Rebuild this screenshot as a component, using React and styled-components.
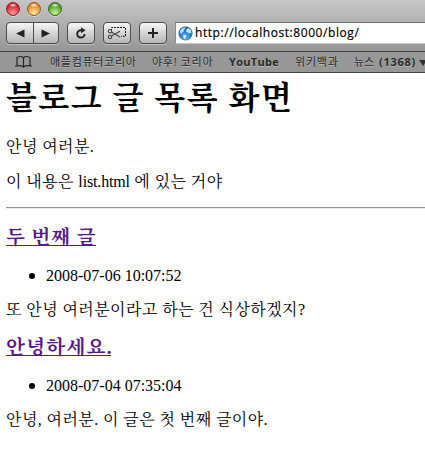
import React from "react";
import styled, { createGlobalStyle } from "styled-components";

const GlobalStyle = createGlobalStyle`
  * { box-sizing: border-box; }
  html, body { margin: 0; background: #fff; overflow: hidden; }
`;

const Browser = styled.div`
  width: 425px;
  height: 454px;
  overflow: hidden;
  background: #fff;
  color: #000;
`;

const Chrome = styled.header`
  height: 52px;
  background: linear-gradient(#c6c6c6, #969696);
  border-bottom: 1px solid #404040;
`;

const TrafficLights = styled.div`
  display: flex;
  gap: 7px;
  height: 22px;
  padding: 2px 0 0 6px;
`;

const Light = styled.i`
  width: 14px;
  height: 14px;
  border-radius: 50%;
  border: 1px solid ${(p) => p.$edge};
  background:
    radial-gradient(ellipse 4px 2px at 50% 18%, #fffffff0, #ffffff00),
    radial-gradient(circle at 50% 85%, ${(p) => p.$glow}, ${(p) => p.$tone} 75%);
  box-shadow: 0 1px 0 #ffffff70;
`;

const Toolbar = styled.div`
  display: flex;
  gap: 8px;
  padding-left: 6px;
  height: 22px;
`;

const ButtonGroup = styled.div`
  display: flex;
  height: 22px;
  border: 1px solid #4d4d4d;
  border-radius: 4px;
  overflow: hidden;
  background: linear-gradient(#f6f6f6, #b5b5b5);
  box-shadow: 0 1px 0 #bdbdbd;
`;

const ToolButton = styled.button`
  display: flex;
  align-items: center;
  justify-content: center;
  width: ${(p) => p.$width || 26}px;
  padding: 0;
  border: 0;
  background: none;
  & + & { border-left: 1px solid #4d4d4d; }
  svg { display: block; }
`;

const AddressField = styled.div`
  display: flex;
  align-items: center;
  flex: 1;
  height: 22px;
  padding-left: 2px;
  background: #fff;
  border: 1px solid #8b8b8b;
  border-top-color: #707070;
  border-right: 0;
  border-bottom-color: #c4c4c4;
  white-space: nowrap;
`;

const Address = styled.span`
  margin-left: 2px;
  font: 12px/20px "Open Sans", "Noto Sans", sans-serif;
  letter-spacing: 0.57px;
  -webkit-text-stroke: 0.2px #000;
`;

const BookmarksBar = styled.nav`
  display: flex;
  height: 21px;
  padding-left: 14px;
  background: #979797;
  border-bottom: 1px solid #464646;
  color: #292929;
  white-space: nowrap;
`;

const BookIcon = styled.svg`
  flex: none;
  width: 19px;
  height: 14px;
  margin-top: 3px;
`;

const Bookmark = styled.span`
  flex: none;
  width: ${(p) => p.$width}px;
  margin-left: ${(p) => p.$gap}px;
  font: ${(p) => (p.$bold ? 700 : 400)} 11px/19px "Open Sans", "Noto Sans CJK KR", sans-serif;
  letter-spacing: ${(p) => p.$track || 0}px;
  text-shadow: 0 1px 0 #b6b6b6;
  b { margin-left: 2px; font-weight: 700; letter-spacing: 0.7px; }
`;

const MenuArrow = styled.svg`
  flex: none;
  width: 7px;
  height: 6px;
  margin-top: 8px;
`;

const Page = styled.main`
  padding: 2px 0 0 6px;
  font-family: "Liberation Serif", "Noto Serif CJK KR", "Noto Sans CJK KR", serif;
  font-size: 16px;
  white-space: nowrap;
`;

const Title = styled.h1`
  margin: 0;
  height: 54px;
  font-size: 32px;
  font-weight: 700;
  line-height: 46px;
  letter-spacing: 1.45px;
`;

const Paragraph = styled.p`
  margin: 0;
  height: ${(p) => p.$height || 35}px;
  line-height: 36px;
  letter-spacing: 0.42px;
`;

const Latin = styled.span`
  letter-spacing: -0.15px;
`;

const Rule = styled.hr`
  margin: 0;
  height: 2px;
  border: 0;
  border-top: 1px solid #959595;
  border-bottom: 1px solid #ececec;
`;

const Entry = styled.article`
  height: 110px;
  padding-top: 10px;
`;

const EntryTitle = styled.h2`
  display: flex;
  margin: 0;
  height: 40px;
  font-size: 19.5px;
  line-height: 38px;
`;

const EntryLink = styled.a`
  height: 27px;
  width: ${(p) => p.$width}px;
  border-bottom: 1px solid #551a8b;
  color: #551a8b;
  letter-spacing: ${(p) => p.$track}px;
`;

const Meta = styled.ul`
  display: flex;
  align-items: center;
  list-style: none;
  margin: 0;
  padding: 0 0 0 23px;
  height: 33px;
  line-height: 18px;
`;

const Stamp = styled.li`
  display: flex;
  align-items: center;
  gap: 11px;
  &::before {
    content: "";
    width: 6px;
    height: 6px;
    border-radius: 50%;
    background: #000;
  }
`;

const BackIcon = () => (
  <svg width="10" height="9"><path d="M9.5.5v8L1 4.5z" fill="#222" /></svg>
);

const ForwardIcon = () => (
  <svg width="10" height="9"><path d="M.5.5v8L9 4.5z" fill="#222" /></svg>
);

const ReloadIcon = () => (
  <svg width="12" height="12" viewBox="0 0 12 12">
    <path d="M6.3 3.2H6A3.7 3.7 0 1 0 9.6 7" fill="none" stroke="#252525" strokeWidth="2" />
    <path d="M6 .2l4.6 3L6 6.2z" fill="#252525" />
  </svg>
);

const SnipIcon = () => (
  <svg width="20" height="14" viewBox="0 0 20 14" fill="none">
    <path d="M4.5 5V1.5h14v8.8H14" stroke="#191919" strokeDasharray="2 1" />
    <g stroke="#444" strokeWidth="1.1">
      <circle cx="3" cy="5.2" r="1.7" />
      <circle cx="3" cy="11" r="1.7" />
      <path d="M4.5 6.1L13 11M4.5 10.1L13 5.2" />
    </g>
  </svg>
);

const PlusIcon = () => (
  <svg width="10" height="10"><path d="M5 0v10M0 5h10" stroke="#222" strokeWidth="2" /></svg>
);

const GlobeIcon = () => (
  <svg width="15" height="15" viewBox="0 0 15 15">
    <defs>
      <radialGradient id="sea" cx=".5" cy=".75" r=".75">
        <stop offset="0" stopColor="#5cb4f0" />
        <stop offset=".6" stopColor="#2476c5" />
        <stop offset="1" stopColor="#194a8e" />
      </radialGradient>
    </defs>
    <circle cx="7.5" cy="7.5" r="7" fill="url(#sea)" />
    <path d="M2 4.5L4.5 2l3-.8L7 3l-1.2.8.3 1.5-1.9 1L3.5 8 2 7z" fill="#b9d9f2" />
    <path d="M8.5 3.2l2-1.2 2.5 2.5.6 3-1.4-.7-.8 1-1.9-1.6L8 5.6z" fill="#c8e3f6" />
    <path d="M5.5 8.2l2.8 1.2-.5 2-1.5 2-1-2.5z" fill="#d8effb" />
  </svg>
);

const entries = [
  { title: "두 번째 글", width: 90, track: 0.9, date: "2008-07-06 10:07:52", body: "또 안녕 여러분이라고 하는 건 식상하겠지?" },
  { title: "안녕하세요.", width: 105, track: 1.3, date: "2008-07-04 07:35:04", body: "안녕, 여러분. 이 글은 첫 번째 글이야." },
];

export default function App() {
  return (
    <Browser>
      <GlobalStyle />
      <Chrome>
        <TrafficLights>
          <Light $edge="#8a2227" $tone="#cf1724" $glow="#ff989a" />
          <Light $edge="#935719" $tone="#df801d" $glow="#ffe99a" />
          <Light $edge="#39661f" $tone="#479324" $glow="#c3f58d" />
        </TrafficLights>
        <Toolbar>
          <ButtonGroup>
            <ToolButton aria-label="Back"><BackIcon /></ToolButton>
            <ToolButton aria-label="Forward" $width={25}><ForwardIcon /></ToolButton>
          </ButtonGroup>
          <ButtonGroup><ToolButton aria-label="Reload"><ReloadIcon /></ToolButton></ButtonGroup>
          <ButtonGroup><ToolButton aria-label="Snip"><SnipIcon /></ToolButton></ButtonGroup>
          <ButtonGroup><ToolButton aria-label="Add"><PlusIcon /></ToolButton></ButtonGroup>
          <AddressField>
            <GlobeIcon />
            <Address>http://localhost:8000/blog/</Address>
          </AddressField>
        </Toolbar>
      </Chrome>
      <BookmarksBar>
        <BookIcon viewBox="0 0 19 14">
          <path d="M9.5 2.7Q8.2 1.5 6.5 1.5T3 2.5V11H1M9.5 2.7Q10.8 1.5 12.5 1.5T16 2.5V11h2M9.5 2.7v9.5M3 11q4.5-1 6.5 1 2-2 6.5-1" fill="none" stroke="#242424" strokeWidth="1.2" />
        </BookIcon>
        <Bookmark $gap={17} $width={87} $track={0.7}>애플컴퓨터코리아</Bookmark>
        <Bookmark $gap={15} $width={62} $track={0.7}>야후! 코리아</Bookmark>
        <Bookmark $gap={15} $width={50} $track={0.3} $bold>YouTube</Bookmark>
        <Bookmark $gap={16} $width={43} $track={0.8}>위키백과</Bookmark>
        <Bookmark $gap={16} $width={65}>뉴스 <b>(1368)</b></Bookmark>
        <MenuArrow viewBox="0 0 7 6"><path d="M0 0h8L4 6z" fill="#333" /></MenuArrow>
      </BookmarksBar>
      <Page>
        <Title>블로그 글 목록 화면</Title>
        <Paragraph>안녕 여러분.</Paragraph>
        <Paragraph $height={43}>이 내용은 <Latin>list.html</Latin> 에 있는 거야</Paragraph>
        <Rule />
        {entries.map((entry) => (
          <Entry key={entry.date}>
            <EntryTitle>
              <EntryLink $width={entry.width} $track={entry.track}>{entry.title}</EntryLink>
            </EntryTitle>
            <Meta><Stamp>{entry.date}</Stamp></Meta>
            <Paragraph $height={27}>{entry.body}</Paragraph>
          </Entry>
        ))}
      </Page>
    </Browser>
  );
}
